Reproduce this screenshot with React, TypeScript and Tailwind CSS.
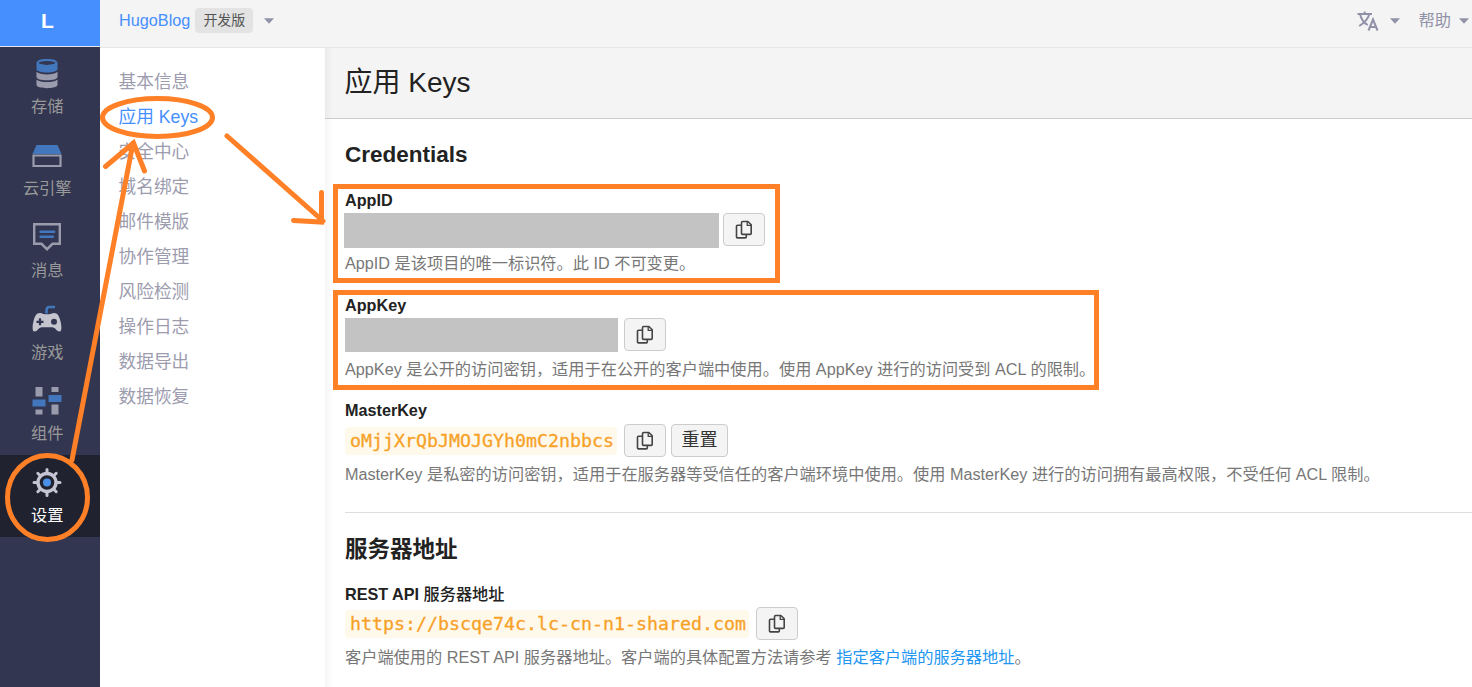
import React from 'react';

const sans = "font-['Liberation_Sans','Noto_Sans_CJK_SC',sans-serif]";

function Caret({ className = '' }: { className?: string }) {
  return (
    <svg width="10" height="6" viewBox="0 0 10 6" className={className} fill="#9192a8">
      <path d="M0 0.3h10L5 5.7z" />
    </svg>
  );
}

function CopyIcon() {
  return (
    <svg width="18" height="20" viewBox="0 0 18 20" fill="none" stroke="#444" strokeWidth="1.6" strokeLinejoin="round">
      <path d="M7.700 1.500h5.200l3.300 3.300v8.600a1 1 0 0 1-1 1H7.500a1 1 0 0 1-1-1V2.700a1.200 1.200 0 0 1 1.200-1.200z" />
      <path d="M12.200 1.800v3.600h3.700" strokeWidth="1.3" />
      <path d="M6.300 5.200H2.500a1 1 0 0 0-1 1v10.700a1 1 0 0 0 1 1h7.800a1 1 0 0 0 1-1v-2.200" />
    </svg>
  );
}

function CopyButton({ className = '' }: { className?: string }) {
  return (
    <button className={`flex h-[33px] w-[42px] items-center justify-center rounded-[4px] border border-[#ccc] bg-[#f4f4f4] ${className}`}>
      <CopyIcon />
    </button>
  );
}

const icons: Record<string, React.ReactNode> = {
  storage: (
    <svg width="30" height="30" viewBox="0 0 30 30">
      <path d="M4.500 20.500v5.300c0 2 4.500 3.400 10.500 3.400s10.500-1.400 10.500-3.400v-5.300c-2 1.900-6 2.600-10.500 2.600s-8.500-.7-10.500-2.600z" fill="#9b9bae" />
      <path d="M4.500 12.800v5.200c0 2 4.500 3.300 10.500 3.300s10.500-1.300 10.500-3.300v-5.200c-2 1.900-6 2.600-10.500 2.600s-8.500-.7-10.500-2.600z" fill="#9b9bae" />
      <path d="M4.500 3.500v6.700c0 1.800 4.500 3.200 10.500 3.200s10.500-1.400 10.500-3.200V3.500z" fill="#4377bd" />
      <ellipse cx="15" cy="3.900" rx="9.300" ry="3" fill="#323650" stroke="#4377bd" strokeWidth="2" />
    </svg>
  ),
  engine: (
    <svg width="30" height="30" viewBox="0 0 30 30">
      <path d="M4.500 4h21l4 9h-29z" fill="#4377bd" />
      <path d="M1.500 14.500h27v10.500h-27z" fill="none" stroke="#9b9bae" strokeWidth="2.200" />
    </svg>
  ),
  message: (
    <svg width="30" height="30" viewBox="0 0 30 30" fill="none">
      <path d="M2.200 2.200h25.600v19.600h-7.300L15 27.200l-5.500-5.400H2.200z" stroke="#9b9bae" strokeWidth="2.400" />
      <path d="M8.500 9.700h13.700M8.500 14.700h12.500" stroke="#4377bd" strokeWidth="2.400" strokeLinecap="round" />
    </svg>
  ),
  game: (
    <svg width="30" height="30" viewBox="0 0 30 30">
      <path d="M14.500 9.500V6.500c0-2.500 1-3.500 3-3.500H23" fill="none" stroke="#4377bd" strokeWidth="2.600" />
      <path d="M8 9c2.500 0 3 1.300 4.800 1.300h4.400C19 10.300 19.500 9 22 9c3.500 0 5 2.800 6.200 7 1.400 5 2 11.500-.6 11.500-2.900 0-4.300-4.300-7.400-4.300H9.800c-3.100 0-4.500 4.300-7.400 4.300C-.2 27.500.4 21 1.800 16 3 11.800 4.500 9 8 9z" fill="#c4c5cf" />
      <path d="M4.500 17.800h7M8 14.300v7" stroke="#323650" strokeWidth="2.200" />
      <circle cx="22" cy="17.800" r="3" fill="#323650" />
    </svg>
  ),
  component: (
    <svg width="30" height="30" viewBox="0 0 30 30">
      <path d="M3.500 1h7v9.500h-7zM3.500 23.500h7V28.500h-7zM19.500 1h7v5h-7zM19.500 18.500h7V28.500h-7z" fill="#9b9bae" />
      <path d="M.5 13.500h13v7H.5zM16.500 9h13v7h-13z" fill="#4377bd" />
    </svg>
  ),
  settings: (
    <svg width="30" height="30" viewBox="0 0 30 30">
      <g stroke="#c4c4d2" strokeWidth="3" strokeLinecap="round">
        <path d="M15 2.500v26M2 15.500h26M5.800 6.300l18.400 18.400M24.200 6.300L5.800 24.700" />
      </g>
      <circle cx="15" cy="15.500" r="9" fill="#202230" stroke="#c4c4d2" strokeWidth="3.400" />
      <circle cx="15" cy="15.500" r="4" fill="#4a8fe8" />
    </svg>
  ),
};

const rail = [
  ['storage', '存储'],
  ['engine', '云引擎'],
  ['message', '消息'],
  ['game', '游戏'],
  ['component', '组件'],
  ['settings', '设置'],
];

const menu = ['基本信息', '应用 Keys', '安全中心', '域名绑定', '邮件模版', '协作管理', '风险检测', '操作日志', '数据导出', '数据恢复'];

function Annotations() {
  return (
    <svg className="pointer-events-none absolute left-0 top-0" width="1472" height="687" viewBox="0 0 1472 687" fill="none" stroke="#ff8026" strokeWidth="5" strokeLinecap="round">
      <rect x="335.500" y="186.500" width="442" height="94" />
      <rect x="335.500" y="292.500" width="761" height="95" />
      <ellipse cx="157.500" cy="117.500" rx="55" ry="19" />
      <ellipse cx="47.500" cy="497.500" rx="40" ry="42" />
      <path d="M72 460L133 143M105.500 166.500L133.500 143L144.500 171" />
      <path d="M227 136L323 221M321.500 192.500V222L293.500 220.500" />
    </svg>
  );
}

function Label({ children }: { children: React.ReactNode }) {
  return <div className="h-[24px] text-[16.200px] font-bold leading-[24px] text-[#222]">{children}</div>;
}

function Note({ children, className = 'mt-[5px]' }: { children: React.ReactNode; className?: string }) {
  return <p className={`h-[24px] whitespace-nowrap text-[16.220px] leading-[24px] text-[#777] ${className}`}>{children}</p>;
}

function Code({ children }: { children: React.ReactNode }) {
  return (
    <code className="flex h-[28px] items-center whitespace-nowrap rounded-[4px] bg-[#fff9eb] pl-[5px] pr-[3px] font-['DejaVu_Sans_Mono',monospace] text-[18.270px] text-[#f7a128] [-webkit-text-stroke:0.3px_#f7a128]">
      {children}
    </code>
  );
}

export default function App() {
  return (
    <div className={`relative flex h-[687px] w-[1472px] overflow-hidden bg-white ${sans}`}>
      <aside className="flex w-[100px] shrink-0 flex-col bg-[#323650]">
        <div className="flex h-[47px] items-center justify-center border-b border-[#e6e6ea] bg-[#468fff] pr-[5px] pb-[4px] text-[21px] font-bold text-white">L</div>
        {rail.map(([id, label]) => (
          <div
            key={id}
            className={`flex h-[81.7px] flex-col items-center pr-[5.500px] pt-[12px] ${id === 'settings' ? 'bg-[#202230] text-white' : 'text-[#999]'}`}
          >
            {icons[id]}
            <span className="mt-[5.450px] text-[16.250px] leading-[24px]">{label}</span>
          </div>
        ))}
      </aside>
      <div className="flex min-w-0 flex-1 flex-col">
        <header className="flex h-[48px] shrink-0 items-center border-b border-[#e6e6e6] bg-[#f4f4f4] pb-[6px] pl-[19px] text-[16.25px]">
          <span className="text-[#468fff]">HugoBlog</span>
          <span className="ml-[5px] flex h-[25px] w-[58px] items-center justify-center rounded-[4px] bg-[#e3e3e3] text-[14px] text-[#555]">开发版</span>
          <Caret className="ml-[11px]" />
          <svg className="ml-auto mt-px" width="22" height="20" viewBox="0 0 22 20" fill="none" stroke="#9192a8" strokeWidth="2">
            <path d="M0.500 3h14.500M7.700 .5v3M3.200 3.500c1 5 4 8.500 7.500 10.500M12.200 3.500c-1.500 5-5 8.500-10 11.500" />
            <path d="M11.500 19.500L16 8.500l4.500 11M13 16h6" />
          </svg>
          <Caret className="ml-[11px]" />
          <span className="ml-[19px] text-[#9192a8]">帮助</span>
          <Caret className="ml-[7.500px] mr-[3.500px]" />
        </header>
        <div className="flex min-h-0 flex-1">
          <nav className="flex w-[225px] shrink-0 flex-col pl-[18.500px] pt-[16.500px] text-[17.700px] leading-[35px]">
            {menu.map((m) => (
              <a key={m} className={`h-[35.040px] ${m === '应用 Keys' ? 'text-[#468fff]' : 'text-[#9c9cae]'}`}>{m}</a>
            ))}
          </nav>
          <main className="flex min-w-0 flex-1 flex-col">
            <div className="flex h-[71px] shrink-0 items-center border-b border-[#ccc] bg-gradient-to-r from-[#ebebeb] to-[#f4f4f4] to-[8px] pl-[19.500px] text-[28px] text-[#222]">应用 Keys</div>
            <div className="flex flex-1 flex-col bg-gradient-to-r from-[#f6f6f6] to-white to-[8px] pl-[20px]">
              <h2 className="mt-[20px] h-[32px] text-[22.500px] font-bold leading-[32px] text-[#222]">Credentials</h2>
              <section className="mt-[17px] h-[105px]">
                <Label>AppID</Label>
                <div className="flex h-[36px] items-end gap-[4px]">
                  <div className="-ml-px h-[35px] w-[375px] bg-[#c3c3c3]" />
                  <CopyButton className="mb-[2px]" />
                </div>
                <Note className="mt-[3px]">AppID 是该项目的唯一标识符。此 ID 不可变更。</Note>
              </section>
              <section className="h-[105px]">
                <Label>AppKey</Label>
                <div className="flex h-[35px] items-center gap-[6px]">
                  <div className="h-[34px] w-[273px] bg-[#c3c3c3]" />
                  <CopyButton />
                </div>
                <Note>AppKey 是公开的访问密钥，适用于在公开的客户端中使用。使用 AppKey 进行的访问受到 ACL 的限制。</Note>
              </section>
              <section className="h-[115px] border-b border-[#ddd]">
                <Label>MasterKey</Label>
                <div className="flex h-[36px] items-center gap-[5px] pt-px">
                  <Code>oMjjXrQbJMOJGYh0mC2nbbcs</Code>
                  <CopyButton className="ml-[2px]" />
                  <button className="flex h-[33px] w-[57px] items-center justify-center rounded-[4px] border border-[#ccc] bg-[#f4f4f4] text-[18px] text-[#333]">重置</button>
                </div>
                <Note className="mt-[4px]">MasterKey 是私密的访问密钥，适用于在服务器等受信任的客户端环境中使用。使用 MasterKey 进行的访问拥有最高权限，不受任何 ACL 限制。</Note>
              </section>
              <h2 className="mt-[21px] h-[32px] text-[22.500px] font-bold leading-[32px] text-[#222]">服务器地址</h2>
              <section className="mt-[16px]">
                <Label>
                  REST API <span className="font-medium">服务器地址</span>
                </Label>
                <div className="flex h-[35px] items-center gap-[7px]">
                  <Code>https://bscqe74c.lc-cn-n1-shared.com</Code>
                  <CopyButton />
                </div>
                <Note className="mt-[4px]">
                  客户端使用的 REST API 服务器地址。客户端的具体配置方法请参考 <a className="text-[#2196f3]">指定客户端的服务器地址</a>。
                </Note>
              </section>
            </div>
          </main>
        </div>
      </div>
      <Annotations />
    </div>
  );
}
